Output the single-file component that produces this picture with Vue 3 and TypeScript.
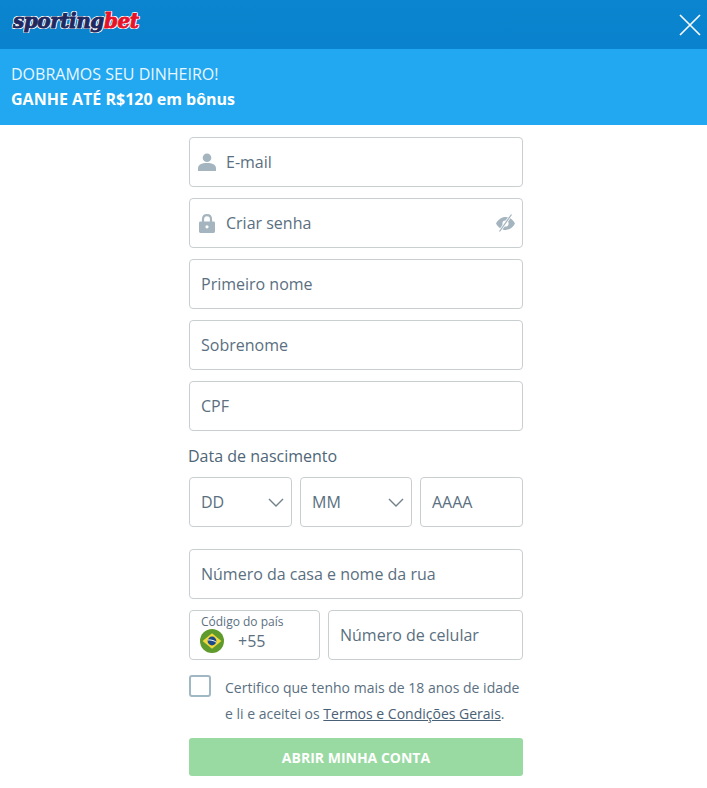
<script setup lang="ts">
const plainFields = ['Primeiro nome', 'Sobrenome', 'CPF']
</script>

<template>
  <div class="page">
    <header class="topbar">
      <div class="logo"><span class="logo-a">sporting</span><span class="logo-b">bet</span></div>
      <button class="close" aria-label="Fechar">
        <svg width="22" height="22" viewBox="0 0 22 22">
          <path d="M1 1 L21 21 M21 1 L1 21" stroke="#fff" stroke-width="1.6" fill="none" />
        </svg>
      </button>
    </header>

    <section class="banner">
      <div class="banner-line">DOBRAMOS SEU DINHEIRO!</div>
      <div class="banner-line strong">GANHE ATÉ R$120 em bônus</div>
    </section>

    <form class="form" @submit.prevent>
      <div class="field with-icon">
        <svg class="icon" width="18" height="18" viewBox="0 0 18 18">
          <circle cx="9" cy="4.8" r="4.3" fill="#a5b5bf" />
          <path d="M0 18 V15.2 C0 11.8 3.6 10 9 10 C14.4 10 18 11.8 18 15.2 V18 Z" fill="#a5b5bf" />
        </svg>
        <span>E-mail</span>
      </div>

      <div class="field with-icon">
        <svg class="icon" width="18" height="19" viewBox="0 0 18 19">
          <path d="M5 8.5 V5.2 C5 2.6 6.6 1.1 9 1.1 C11.4 1.1 13 2.6 13 5.2 V8.5" stroke="#a5b5bf" stroke-width="2.2" fill="none" />
          <path fill-rule="evenodd" d="M2.4 7.5 H15.6 A1.4 1.4 0 0 1 17 8.9 V17.6 A1.4 1.4 0 0 1 15.6 19 H2.4 A1.4 1.4 0 0 1 1 17.6 V8.9 A1.4 1.4 0 0 1 2.4 7.5 Z M9 11.2 A1.6 1.6 0 1 0 9 14.4 A1.6 1.6 0 1 0 9 11.2 Z" fill="#a5b5bf" />
        </svg>
        <span>Criar senha</span>
        <svg class="eye" width="19" height="18" viewBox="0 0 19 18">
          <path fill-rule="evenodd" d="M0 9.5 C2.2 5.4 5.6 3 9.5 3 C13.4 3 16.8 5.4 19 9.5 C16.8 13.6 13.4 16 9.5 16 C5.6 16 2.2 13.6 0 9.5 Z M9.5 6.4 A3.1 3.1 0 1 0 9.5 12.6 A3.1 3.1 0 1 0 9.5 6.4 Z" fill="#a5b5bf" />
          <path d="M3.5 17.5 L15.5 .5" stroke="#fff" stroke-width="2.6" />
          <path d="M3.5 17.5 L15.5 .5" stroke="#a5b5bf" stroke-width="1.3" />
        </svg>
      </div>

      <div v-for="label in plainFields" :key="label" class="field">
        <span>{{ label }}</span>
      </div>

      <div class="dob-label">Data de nascimento</div>
      <div class="dob-row">
        <div class="field select day">
          <span>DD</span>
          <svg class="chev" width="16" height="9" viewBox="0 0 16 9"><path d="M1 1 L8 8 L15 1" stroke="#71818c" stroke-width="1.4" fill="none" /></svg>
        </div>
        <div class="field select month">
          <span>MM</span>
          <svg class="chev" width="16" height="9" viewBox="0 0 16 9"><path d="M1 1 L8 8 L15 1" stroke="#71818c" stroke-width="1.4" fill="none" /></svg>
        </div>
        <div class="field year"><span>AAAA</span></div>
      </div>

      <div class="field address"><span>Número da casa e nome da rua</span></div>

      <div class="phone-row">
        <div class="field country">
          <div class="country-label">Código do país</div>
          <div class="country-value">
            <svg width="24" height="24" viewBox="0 0 24 24">
              <circle cx="12" cy="12" r="12" fill="#5f9a2c" />
              <path d="M12 4.2 L21.4 12 L12 19.8 L2.6 12 Z" fill="#f1d83e" />
              <circle cx="12" cy="12" r="4.4" fill="#1c4a86" />
              <path d="M7.8 11 C10 10.6 14 11.4 16.2 13.2" stroke="#fff" stroke-width="1" fill="none" />
            </svg>
            <span>+55</span>
          </div>
        </div>
        <div class="field mobile"><span>Número de celular</span></div>
      </div>

      <div class="terms">
        <span class="checkbox"></span>
        <p>Certifico que tenho mais de 18 anos de idade<br />e li e aceitei os <a href="#">Termos e Condições Gerais</a>.</p>
      </div>

      <button class="submit" type="submit">ABRIR MINHA CONTA</button>
    </form>
  </div>
</template>

<style scoped>
.page {
  width: 707px;
  height: 788px;
  background: #fff;
  overflow: hidden;
  font-family: "Open Sans", "Noto Sans", sans-serif;
  color: #5a6f7f;
}

.topbar {
  height: 49px;
  background: linear-gradient(#0b85cf, #0a82cd);
  display: flex;
  align-items: center;
  justify-content: space-between;
  padding: 0 6px 7px 13px;
  box-sizing: border-box;
}

.logo {
  font-family: "DejaVu Serif", serif;
  font-weight: 700;
  font-style: italic;
  font-size: 20px;
  line-height: 26px;
  letter-spacing: -0.45px;
  -webkit-text-stroke: 0.9px currentColor;
  text-shadow: 1px 0 #fff, -1px 0 #fff, 0 1px #fff, 0 -1px #fff, 1px 1px #fff, -1px -1px #fff, 1px -1px #fff, -1px 1px #fff;
}

.logo-a { color: #20285f; }
.logo-b { color: #e5122a; }

.close {
  width: 22px;
  height: 22px;
  padding: 0;
  border: 0;
  background: none;
  margin-top: 7px;
}

.close svg { display: block; }

.banner {
  height: 76px;
  box-sizing: border-box;
  background: #22a8f0;
  color: #fff;
  padding: 13px 11px 0;
  font-size: 16px;
  line-height: 25px;
}

.banner-line { color: #eaf6fe; }
.banner-line.strong { font-weight: 700; color: #fff; }

.form {
  width: 334px;
  margin: 12px 0 0 189px;
  display: flex;
  flex-direction: column;
  gap: 11px;
}

.field {
  height: 50px;
  box-sizing: border-box;
  border: 1px solid #c9ced1;
  border-radius: 4px;
  background: #fff;
  display: flex;
  align-items: center;
  padding: 0 11px;
  font-size: 16px;
  color: #5a6f7f;
  position: relative;
}

.with-icon .icon { margin: 0 10px 0 -2px; flex: none; }
.with-icon { padding-left: 10px; }

.eye {
  position: absolute;
  right: 7px;
  top: 15px;
}

.dob-label {
  font-size: 16px;
  line-height: 22px;
  height: 22px;
  margin: 3px 0 -1px;
  margin-left: -1px;
  color: #4f6677;
}

.dob-row {
  display: flex;
  gap: 8px;
  margin-bottom: 11px;
}

.day { width: 103px; }
.month { width: 112px; }
.year { width: 103px; padding-right: 0; }

.select { justify-content: space-between; padding-right: 6px; }
.select .chev { margin-right: 1px; }

.phone-row {
  display: flex;
  gap: 8px;
}

.country {
  width: 131px;
  display: block;
  padding: 3px 11px 0;
}

.country-label {
  font-size: 12px;
  line-height: 16px;
  color: #5a6f7f;
}

.country-value {
  display: flex;
  align-items: center;
  gap: 14px;
  margin: -1px 0 0 -1px;
}

.country-value svg { display: block; flex: none; }

.mobile { flex: 1; }

.terms {
  display: flex;
  gap: 14px;
  margin-top: 4px;
}

.checkbox {
  width: 22px;
  height: 22px;
  box-sizing: border-box;
  border: 2px solid #a0b7c4;
  border-radius: 3px;
  flex: none;
}

.terms p {
  margin: 0;
  font-size: 14px;
  line-height: 26px;
  color: #5a6f7f;
  white-space: nowrap;
}

.terms a { color: #4a6074; text-decoration: underline; }

.submit {
  height: 38px;
  border: 0;
  border-radius: 3px;
  background: #99d9a2;
  color: #fff;
  font-family: inherit;
  font-weight: 700;
  font-size: 14px;
}
</style>

<style>
html, body { margin: 0; background: #fff; }
</style>
